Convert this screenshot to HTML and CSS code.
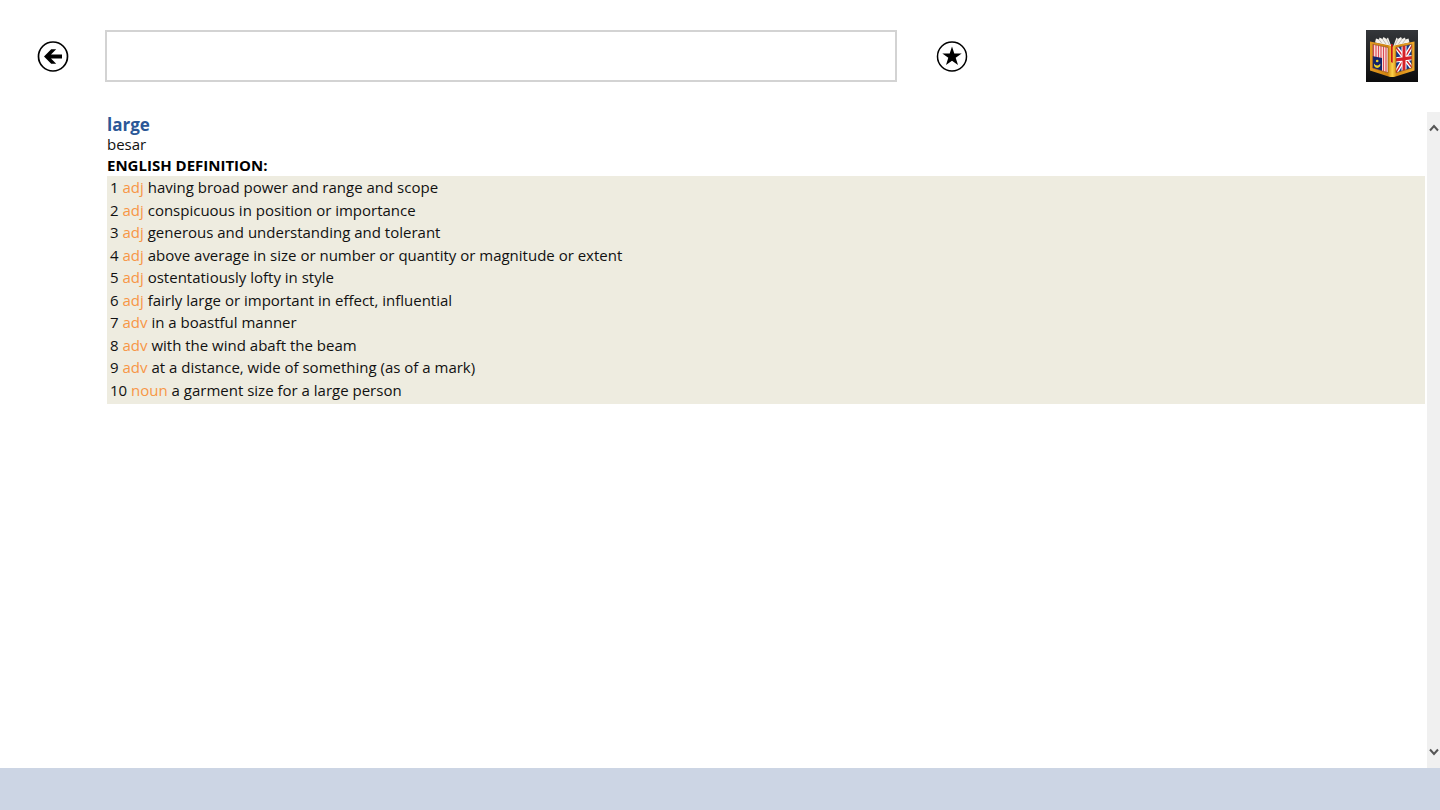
FILE: index.html
```
<!DOCTYPE html>
<html lang="en">
<head>
  <meta charset="UTF-8" />
  <title>large - English Malay Dictionary</title>
  <link rel="stylesheet" href="styles.css">
</head>
<body>
  <!-- search bar -->
  <header class="topbar">
    <button class="icon-btn" type="button" aria-label="Back">
      <svg viewBox="0 0 32 32" width="32" height="32">
        <circle cx="16" cy="16.5" r="14.5" fill="none" stroke="#000" stroke-width="1.7" />
        <path d="M7 16.500L14.200 9.300h5l-5.200 5.300H25v3.800H14l5.200 5.300h-5z" />
      </svg>
    </button>
    <input class="search" type="text" aria-label="Search word" />
    <button class="icon-btn" type="button" aria-label="Add to favourites">
      <svg viewBox="0 0 32 32" width="32" height="32">
        <circle cx="16" cy="16.5" r="14.5" fill="none" stroke="#000" stroke-width="1.5" />
        <path d="M16 6.500l2.300 7h7.400l-6 4.300 2.300 7.200L16 20.700l-6 4.300 2.300-7.200-6-4.300h7.400z" />
      </svg>
    </button>
    <svg class="logo" viewBox="0 0 52 52" width="52" height="52" role="img" aria-label="Dictionary">
      <defs>
        <linearGradient id="tile" x1="0" y1="0" x2="0" y2="1">
          <stop offset="0" stop-color="#34363a" />
          <stop offset="1" stop-color="#0c0c0d" />
        </linearGradient>
        <linearGradient id="gold" x1="0" y1="0" x2="1" y2="0">
          <stop offset="0" stop-color="#e39a22" />
          <stop offset="0.4" stop-color="#d0820f" />
          <stop offset="0.5" stop-color="#fbd24a" />
          <stop offset="0.6" stop-color="#d98c14" />
          <stop offset="1" stop-color="#f0a92c" />
        </linearGradient>
        <clipPath id="left"><path d="M6.700 14.300L22 17.500V42.700L6.700 38z" /></clipPath>
        <clipPath id="right"><path d="M30 17.500L45.800 14.300V38L30 42.700z" /></clipPath>
      </defs>
      <rect width="52" height="52" fill="url(#tile)" />
      <!-- pages -->
      <path d="M9 12.500l1-4 3 1 .5-2 3 1.500 1-2 3 2 1.500-1.500 3 8v1z" fill="#f4f1ec" />
      <path d="M43.500 12.500l-1-4-3 1-.5-2-3 1.500-1-2-3 2-1.500-1.500-3 8v1z" fill="#f4f1ec" />
      <path d="M13 9.500l3 4M16.500 9l3.500 5M20.500 9l3 6M39.500 9.500l-3 4M36 9l-3.500 5M32 9l-3 6" stroke="#9a938c" stroke-width=".6" />
      <!-- covers -->
      <path d="M4 11.500L24 15.500l2 1.500 2-1.500L48.500 11.500V40.500L28 47h-4L4 40.500z" fill="url(#gold)" />
      <path d="M25 14h1.700v19l-1.700-1z" fill="#c91418" />
      <!-- Malaysia -->
      <g clip-path="url(#left)">
        <path d="M6 12h17v33H6z" fill="#fbe8e6" />
        <path d="M7.500 12v33M10 12v33M12.500 12v33M15 12v33M17.500 12v33M20 12v33" stroke="#dc4a54" stroke-width="1.200" />
        <path d="M6 26l10 2V42L6 39z" fill="#11246c" />
        <path d="M8.300 33.500a3.200 3.200 0 1 0 5.800 0a3 2.600 0 0 1-5.800 0z" fill="#efd227" />
        <circle cx="11.2" cy="31" r="1.3" fill="#efd227" />
      </g>
      <!-- United Kingdom -->
      <g clip-path="url(#right)">
        <path d="M29 12h18v33H29z" fill="#15388c" />
        <path d="M29 16L47 39M47 14L29 44" stroke="#fff" stroke-width="4" />
        <path d="M29 16L47 39M47 14L29 44" stroke="#d52128" stroke-width="1.400" />
        <path d="M38 12v33M29 30l18-2.500" stroke="#fff" stroke-width="5" />
        <path d="M38 12v33M29 30l18-2.500" stroke="#d52128" stroke-width="3" />
      </g>
      <path d="M6.700 14.300L22 17.500V42.700L6.700 38zM30 17.500L45.800 14.300V38L30 42.700z" fill="none" stroke="#8a4c08" stroke-width=".6" />
    </svg>
  </header>

  <!-- word entry -->
  <div class="content">
    <main class="entry">
      <h1 class="word">large</h1>
      <p class="translation">besar</p>
      <h2 class="section-title">ENGLISH DEFINITION:</h2>
      <div class="definitions">
        <p>1 <span class="pos">adj</span> having broad power and range and scope</p>
        <p>2 <span class="pos">adj</span> conspicuous in position or importance</p>
        <p>3 <span class="pos">adj</span> generous and understanding and tolerant</p>
        <p>4 <span class="pos">adj</span> above average in size or number or quantity or magnitude or extent</p>
        <p>5 <span class="pos">adj</span> ostentatiously lofty in style</p>
        <p>6 <span class="pos">adj</span> fairly large or important in effect, influential</p>
        <p>7 <span class="pos">adv</span> in a boastful manner</p>
        <p>8 <span class="pos">adv</span> with the wind abaft the beam</p>
        <p>9 <span class="pos">adv</span> at a distance, wide of something (as of a mark)</p>
        <p>10 <span class="pos">noun</span> a garment size for a large person</p>
      </div>
    </main>
    <div class="scrollbar">
      <button type="button" aria-label="Scroll up">
        <svg viewBox="0 0 10 8" width="10" height="8"><path d="M1 6.500L5 2l4 4.500" /></svg>
      </button>
      <button type="button" aria-label="Scroll down">
        <svg viewBox="0 0 10 8" width="10" height="8"><path d="M1 1.500L5 6l4-4.500" /></svg>
      </button>
    </div>
  </div>

  <footer class="ad-bar"></footer>
</body>
</html>
```
FILE: styles.css
```
* {
  box-sizing: border-box;
}

body {
  margin: 0;
  min-height: 100vh;
  display: flex;
  flex-direction: column;
  background-color: #fff;
  color: #111;
  font-family: "Open Sans", "Noto Sans", sans-serif;
  font-size: 15px;
}

h1, h2, p {
  margin: 0;
}

/* search bar */
.topbar {
  display: flex;
  align-items: center;
  padding: 30px 22px 30px 37px;
}

.icon-btn {
  width: 32px;
  height: 32px;
  padding: 0;
  border: none;
  background: none;
  cursor: pointer;
}

.icon-btn svg {
  display: block;
}

.search {
  width: 55vw;
  height: 52px;
  margin: 0 39px 0 36px;
  padding: 0 12px;
  border: 2px solid #d3d3d3;
  background-color: #fff;
  font-family: inherit;
  font-size: 20px;
}

.logo {
  margin-left: auto;
}

/* word entry */
.content {
  flex: 1;
  display: flex;
}

.entry {
  flex: 1;
  padding: 2px 2px 0 107px;
}

.word {
  color: #2b5797;
  font-size: 17px;
  line-height: 21px;
}

.translation {
  line-height: 19px;
}

.section-title {
  color: #000;
  font-size: 15px;
  line-height: 22px;
}

.definitions {
  padding: 0 3px 3px;
  background-color: #eeece0;
  line-height: 1.5;
}

.pos {
  color: #f79646;
}

/* scrollbar */
.scrollbar {
  width: 13px;
  padding: 11px 0;
  display: flex;
  flex-direction: column;
  justify-content: space-between;
  background-color: #f0f0f0;
}

.scrollbar button {
  width: 13px;
  height: 10px;
  padding: 0;
  border: none;
  background: none;
  display: flex;
  align-items: center;
  justify-content: center;
}

.scrollbar path {
  fill: none;
  stroke: #555;
  stroke-width: 2;
}

/* bottom bar */
.ad-bar {
  height: 42px;
  background-color: #ccd5e4;
}
```
